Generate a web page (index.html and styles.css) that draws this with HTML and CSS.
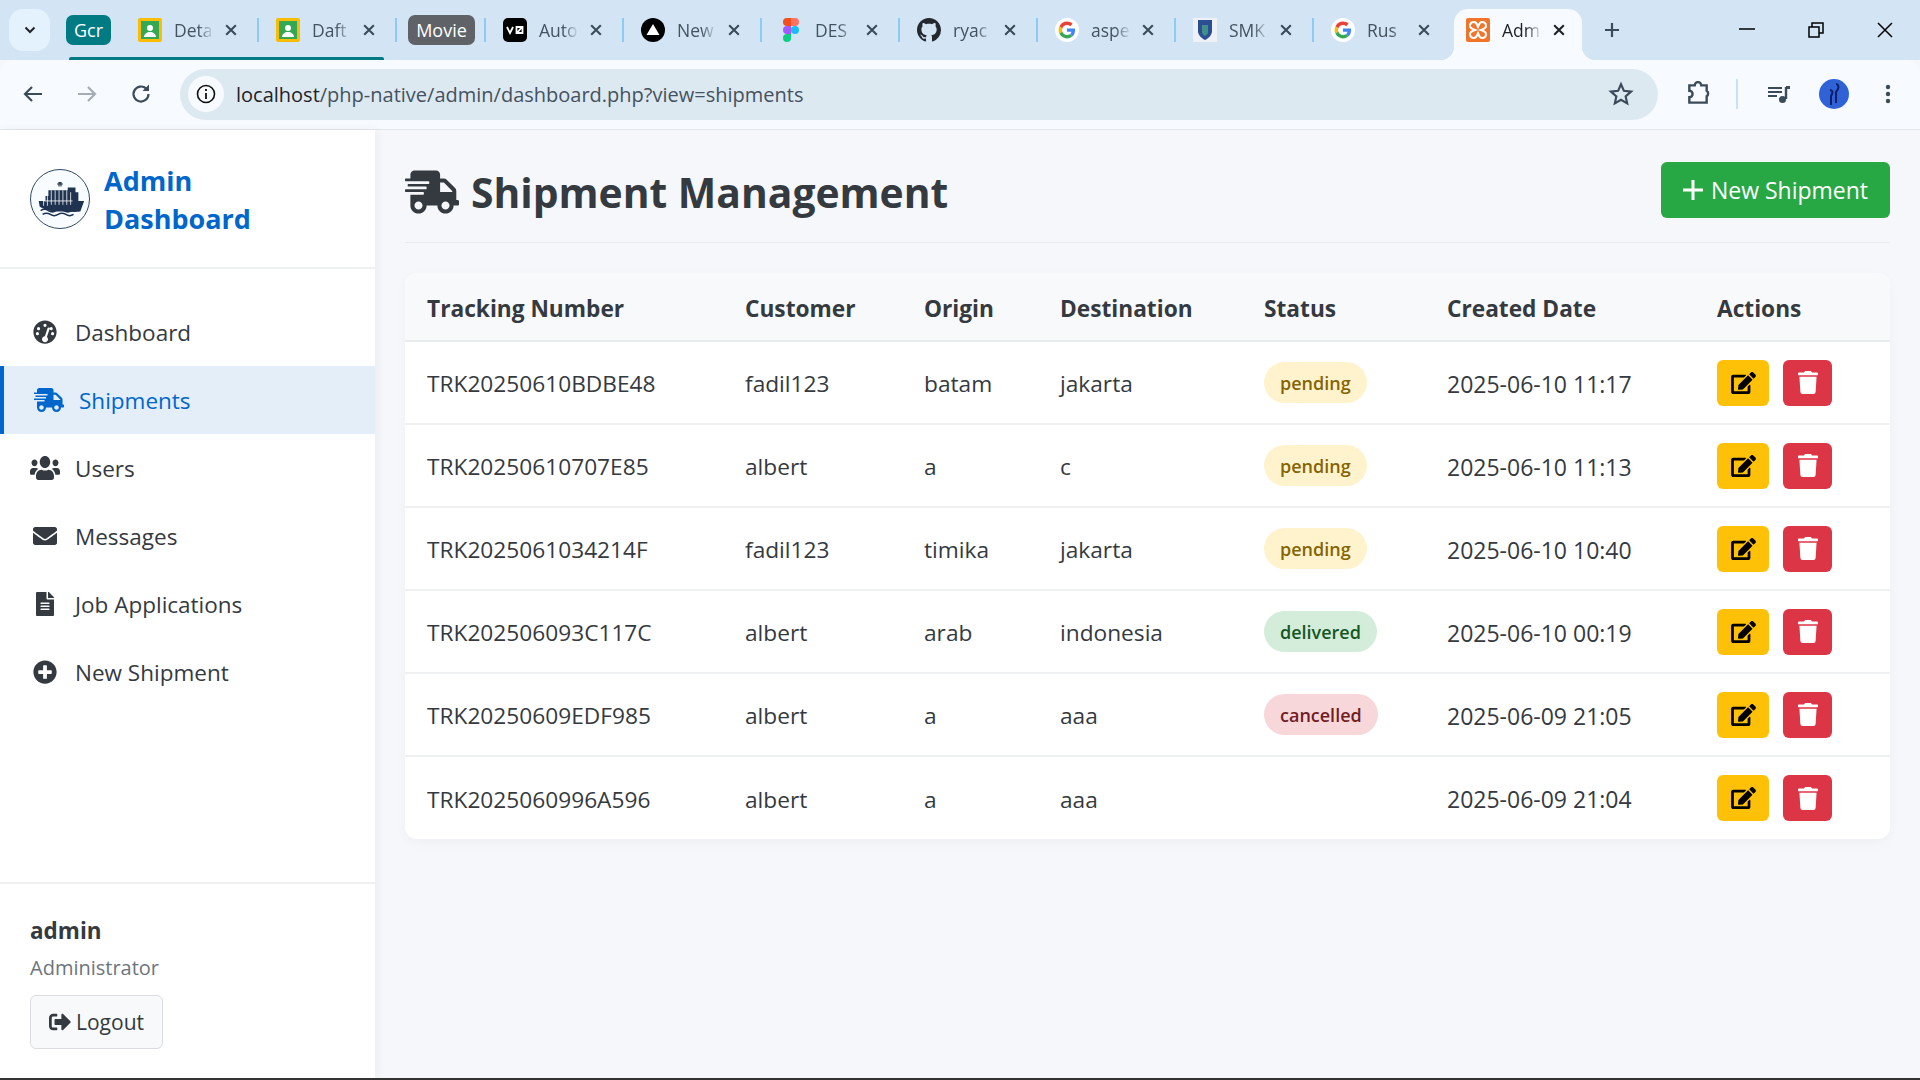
FILE: index.html
```html
<!DOCTYPE html>
<html lang="en">
<head>
  <meta charset="UTF-8">
  <meta name="viewport" content="width=device-width, initial-scale=1.0">
  <title>Admin Dashboard</title>
  <link rel="stylesheet" href="styles.css">
</head>
<body>
  <!-- icon sprite -->
  <svg class="sprite" aria-hidden="true">
    <symbol id="i-truck" viewBox="0 0 640 512"><path d="M624 352h-16V243.9c0-12.7-5.1-24.9-14.1-33.9L494 110.1c-9-9-21.2-14.1-33.9-14.1H416V48c0-26.5-21.5-48-48-48H112C85.5 0 64 21.5 64 48v48H8c-4.4 0-8 3.6-8 8v16c0 4.4 3.6 8 8 8h272c4.4 0 8 3.6 8 8v16c0 4.4-3.6 8-8 8H40c-4.4 0-8 3.6-8 8v16c0 4.4 3.6 8 8 8h208c4.4 0 8 3.6 8 8v16c0 4.4-3.6 8-8 8H8c-4.4 0-8 3.6-8 8v16c0 4.4 3.6 8 8 8h208c4.4 0 8 3.6 8 8v16c0 4.4-3.6 8-8 8H64v128c0 53 43 96 96 96s96-43 96-96h128c0 53 43 96 96 96s96-43 96-96h48c8.8 0 16-7.2 16-16v-32c0-8.8-7.2-16-16-16zM160 464c-26.5 0-48-21.5-48-48s21.5-48 48-48 48 21.5 48 48-21.5 48-48 48zm320 0c-26.5 0-48-21.5-48-48s21.5-48 48-48 48 21.5 48 48-21.5 48-48 48zm80-208H416V144h44.1l99.9 99.9V256z"/></symbol>
    <symbol id="i-gauge" viewBox="0 0 512 512"><path fill-rule="evenodd" d="M256 8C119 8 8 119 8 256s111 248 248 248 248-111 248-248S393 8 256 8zm0 72a34 34 0 1 1 0 68 34 34 0 0 1 0-68zM118 150a34 34 0 1 1 0 68 34 34 0 0 1 0-68zm-24 108a34 34 0 1 1 0 68 34 34 0 0 1 0-68zm324 0a34 34 0 1 1 0 68 34 34 0 0 1 0-68zm-30-108a34 34 0 1 1-1 68 34 34 0 0 1 1-68zm-46 12c11 5 16 17 12 28l-58 174c16 13 24 30 24 46 0 34-28 62-64 62s-64-28-64-62c0-35 27-62 62-63l58-174c4-11 18-16 30-11z"/></symbol>
    <symbol id="i-users" viewBox="0 32 640 448" preserveAspectRatio="none"><path d="M96 224c35.3 0 64-28.7 64-64s-28.7-64-64-64-64 28.7-64 64 28.7 64 64 64zm448 0c35.3 0 64-28.7 64-64s-28.7-64-64-64-64 28.7-64 64 28.7 64 64 64zm32 32h-64c-17.6 0-33.5 7.1-45.1 18.6 40.3 22.1 68.9 62 75.1 109.4h66c17.7 0 32-14.3 32-32v-32c0-35.3-28.7-64-64-64zm-256 0c61.9 0 112-50.1 112-112S381.9 32 320 32 208 82.1 208 144s50.1 112 112 112zm76.8 32h-8.3c-20.8 10-43.9 16-68.5 16s-47.6-6-68.5-16h-8.3C179.6 288 128 339.6 128 403.2V432c0 26.5 21.5 48 48 48h288c26.5 0 48-21.5 48-48v-28.8c0-63.6-51.6-115.2-115.2-115.2zm-223.7-13.4C161.5 263.1 145.6 256 128 256H64c-35.3 0-64 28.7-64 64v32c0 17.7 14.3 32 32 32h65.9c6.3-47.4 34.9-87.3 75.2-109.4z"/></symbol>
    <symbol id="i-mail" viewBox="0 0 512 512"><path d="M502.3 190.8c3.9-3.1 9.7-.2 9.7 4.7V400c0 26.5-21.5 48-48 48H48c-26.5 0-48-21.5-48-48V195.6c0-5 5.7-7.8 9.7-4.7 22.4 17.4 52.1 39.5 154.1 113.6 21.1 15.4 56.7 47.8 92.2 47.6 35.7.3 72-32.8 92.3-47.6 102-74.1 131.6-96.3 154-113.7zM256 320c23.2.4 56.6-29.2 73.4-41.4 132.7-96.3 142.8-104.7 173.4-128.7 5.8-4.5 9.2-11.5 9.2-18.9v-19c0-26.5-21.5-48-48-48H48C21.5 64 0 85.5 0 112v19c0 7.4 3.4 14.3 9.2 18.9 30.6 23.9 40.7 32.4 173.4 128.7 16.8 12.2 50.2 41.8 73.4 41.4z"/></symbol>
    <symbol id="i-file" viewBox="0 0 384 512"><path d="M224 136V0H24C10.7 0 0 10.7 0 24v464c0 13.3 10.7 24 24 24h336c13.3 0 24-10.7 24-24V160H248c-13.2 0-24-10.8-24-24zm64 236c0 6.6-5.4 12-12 12H108c-6.6 0-12-5.4-12-12v-8c0-6.6 5.4-12 12-12h168c6.6 0 12 5.4 12 12v8zm0-64c0 6.6-5.4 12-12 12H108c-6.6 0-12-5.4-12-12v-8c0-6.6 5.4-12 12-12h168c6.6 0 12 5.4 12 12v8zm0-72v8c0 6.6-5.4 12-12 12H108c-6.6 0-12-5.4-12-12v-8c0-6.6 5.4-12 12-12h168c6.6 0 12 5.4 12 12zm96-114.1v6.1H256V0h6.1c6.4 0 12.5 2.5 17 7l97.9 98c4.5 4.5 7 10.6 7 16.9z"/></symbol>
    <symbol id="i-plus-circle" viewBox="0 0 512 512"><path d="M256 8C119 8 8 119 8 256s111 248 248 248 248-111 248-248S393 8 256 8zm144 276c0 6.6-5.4 12-12 12h-92v92c0 6.6-5.4 12-12 12h-56c-6.6 0-12-5.4-12-12v-92h-92c-6.6 0-12-5.4-12-12v-56c0-6.6 5.4-12 12-12h92v-92c0-6.6 5.4-12 12-12h56c6.6 0 12 5.4 12 12v92h92c6.6 0 12 5.4 12 12v56z"/></symbol>
    <symbol id="i-logout" viewBox="0 0 512 512"><path d="M497 273L329 441c-15 15-41 4.5-41-17v-96H152c-13.3 0-24-10.7-24-24v-96c0-13.3 10.7-24 24-24h136V88c0-21.4 25.9-32 41-17l168 168c9.3 9.4 9.3 24.6 0 34zM192 436v-40c0-6.6-5.4-12-12-12H96c-17.7 0-32-14.3-32-32V160c0-17.7 14.3-32 32-32h84c6.6 0 12-5.4 12-12V76c0-6.6-5.4-12-12-12H96c-53 0-96 43-96 96v192c0 53 43 96 96 96h84c6.6 0 12-5.4 12-12z"/></symbol>
    <symbol id="i-trash" viewBox="0 0 448 512"><path d="M432 32H312l-9.4-18.7A24 24 0 0 0 281.1 0H166.8a23.72 23.72 0 0 0-21.4 13.3L136 32H16A16 16 0 0 0 0 48v32a16 16 0 0 0 16 16h416a16 16 0 0 0 16-16V48a16 16 0 0 0-16-16zM53.2 467a48 48 0 0 0 47.9 45h245.8a48 48 0 0 0 47.9-45L416 128H32z"/></symbol>
    <symbol id="i-edit" viewBox="0 0 576 512"><path d="M402.6 83.2l90.2 90.2c3.8 3.8 3.8 10 0 13.8L274.4 405.6l-92.8 10.3c-12.4 1.4-22.9-9.1-21.5-21.5l10.3-92.8L388.8 83.2c3.8-3.8 10-3.8 13.8 0zm162-22.9l-48.8-48.8c-15.2-15.2-39.9-15.2-55.2 0l-35.4 35.4c-3.8 3.8-3.8 10 0 13.8l90.2 90.2c3.8 3.8 10 3.8 13.8 0l35.4-35.4c15.2-15.3 15.2-40 0-55.2zM384 346.2V448H64V128h229.8c3.2 0 6.2-1.3 8.5-3.5l40-40c7.6-7.6 2.2-20.5-8.5-20.5H48C21.5 64 0 85.5 0 112v352c0 26.5 21.5 48 48 48h352c26.5 0 48-21.5 48-48V306.2c0-10.7-12.9-16-20.5-8.5l-40 40c-2.2 2.3-3.5 5.3-3.5 8.5z"/></symbol>
    <symbol id="i-x" viewBox="0 0 16 16"><path d="M2.5 2.5l11 11M13.5 2.5l-11 11" fill="none" stroke="currentColor" stroke-width="2.4"/></symbol>
    <symbol id="f-classroom" viewBox="0 0 24 24"><rect width="24" height="24" rx="2" fill="#fbbc04"/><rect x="3" y="3" width="18" height="18" fill="#34a853"/><circle cx="12" cy="10" r="3" fill="#fff"/><path d="M6 19c0-3 3-5 6-5s6 2 6 5z" fill="#fff"/></symbol>
    <symbol id="f-google" viewBox="0 0 24 24"><circle cx="12" cy="12" r="12" fill="#fff"/><g transform="translate(3.6 3.6) scale(.35)"><path fill="#ea4335" d="M24 9.5c3.54 0 6.71 1.22 9.21 3.6l6.85-6.85C35.9 2.38 30.47 0 24 0 14.62 0 6.51 5.38 2.56 13.22l7.98 6.19C12.43 13.72 17.74 9.5 24 9.5z"/><path fill="#4285f4" d="M46.98 24.55c0-1.57-.15-3.09-.38-4.55H24v9.02h12.94c-.58 2.96-2.26 5.48-4.78 7.18l7.73 6c4.51-4.18 7.09-10.36 7.09-17.65z"/><path fill="#fbbc05" d="M10.53 28.59c-.48-1.45-.76-2.99-.76-4.59s.27-3.14.76-4.59l-7.98-6.19C.92 16.46 0 20.12 0 24c0 3.88.92 7.54 2.56 10.78l7.97-6.19z"/><path fill="#34a853" d="M24 48c6.48 0 11.93-2.13 15.89-5.81l-7.73-6c-2.15 1.45-4.92 2.3-8.16 2.3-6.26 0-11.57-4.22-13.47-9.91l-7.98 6.19C6.51 42.62 14.62 48 24 48z"/></g></symbol>
  </svg>

  <header class="browser">
    <div class="tabstrip">
      <div class="tab-search"><svg class="chev" viewBox="0 0 12 8"><path d="M1.5 1.5L6 6l4.5-4.5" fill="none" stroke="#1f2328" stroke-width="2"/></svg></div>

      <div class="tab-group">
        <span class="chip chip-teal">Gcr</span>
        <div class="tab">
          <svg class="favicon"><use href="#f-classroom"/></svg>
          <span class="tab-title">Deta</span>
          <svg class="tab-close"><use href="#i-x"/></svg>
        </div>
        <div class="tab">
          <svg class="favicon"><use href="#f-classroom"/></svg>
          <span class="tab-title">Daft</span>
          <svg class="tab-close"><use href="#i-x"/></svg>
        </div>
      </div>

      <div class="chip-wrap"><span class="chip chip-gray">Movie</span></div>

      <div class="tab">
        <svg class="favicon" viewBox="0 0 24 24"><rect width="24" height="24" rx="5" fill="#000"/><path d="M4 9l3 6 3-6M13.5 9h6v6h-6zM14 15l5-6" fill="none" stroke="#fff" stroke-width="1.8"/></svg>
        <span class="tab-title">Auto</span>
        <svg class="tab-close"><use href="#i-x"/></svg>
      </div>
      <div class="tab">
        <svg class="favicon" viewBox="0 0 24 24"><circle cx="12" cy="12" r="12" fill="#000"/><path d="M12 6l6.5 11h-13z" fill="#fff"/></svg>
        <span class="tab-title">New</span>
        <svg class="tab-close"><use href="#i-x"/></svg>
      </div>
      <div class="tab">
        <svg class="favicon" viewBox="0 0 24 24"><path d="M8 0h4v8H8a4 4 0 0 1 0-8z" fill="#f24e1e"/><path d="M12 0h4a4 4 0 0 1 0 8h-4z" fill="#ff7262"/><path d="M8 8h4v8H8a4 4 0 0 1 0-8z" fill="#a259ff"/><circle cx="16" cy="12" r="4" fill="#1abcfe"/><path d="M8 16h4v4a4 4 0 1 1-4-4z" fill="#0acf83"/></svg>
        <span class="tab-title">DES</span>
        <svg class="tab-close"><use href="#i-x"/></svg>
      </div>
      <div class="tab">
        <svg class="favicon" viewBox="0 0 16 16"><path fill="#24292f" d="M8 0C3.58 0 0 3.58 0 8c0 3.54 2.29 6.53 5.47 7.59.4.07.55-.17.55-.38 0-.19-.01-.82-.01-1.49-2.01.37-2.53-.49-2.69-.94-.09-.23-.48-.94-.82-1.13-.28-.15-.68-.52-.01-.53.63-.01 1.08.58 1.23.82.72 1.21 1.87.87 2.33.66.07-.52.28-.87.51-1.07-1.78-.2-3.64-.89-3.64-3.95 0-.87.31-1.59.82-2.15-.08-.2-.36-1.02.08-2.12 0 0 .67-.21 2.2.82.64-.18 1.32-.27 2-.27.68 0 1.36.09 2 .27 1.53-1.04 2.2-.82 2.2-.82.44 1.1.16 1.92.08 2.12.51.56.82 1.27.82 2.15 0 3.07-1.87 3.75-3.65 3.95.29.25.54.73.54 1.48 0 1.07-.01 1.93-.01 2.2 0 .21.15.46.55.38A8.013 8.013 0 0016 8c0-4.42-3.58-8-8-8z"/></svg>
        <span class="tab-title">ryac</span>
        <svg class="tab-close"><use href="#i-x"/></svg>
      </div>
      <div class="tab">
        <svg class="favicon"><use href="#f-google"/></svg>
        <span class="tab-title">aspe</span>
        <svg class="tab-close"><use href="#i-x"/></svg>
      </div>
      <div class="tab">
        <svg class="favicon" viewBox="0 0 24 24"><rect width="24" height="24" fill="#eef1f5"/><path d="M5 2h14v11c0 4-3 7-7 9-4-2-7-5-7-9z" fill="#2c4f94"/><path d="M9 7h6v7c0 2-1.5 3-3 4-1.5-1-3-2-3-4z" fill="#3f8f8a"/></svg>
        <span class="tab-title">SMK</span>
        <svg class="tab-close"><use href="#i-x"/></svg>
      </div>
      <div class="tab tab-last">
        <svg class="favicon"><use href="#f-google"/></svg>
        <span class="tab-title">Rus</span>
        <svg class="tab-close"><use href="#i-x"/></svg>
      </div>
      <div class="tab-active">
        <svg class="favicon" viewBox="0 0 24 24"><rect width="24" height="24" rx="2" fill="#f0742a"/><path d="M8 4c-3 0-4 2-4 4s2 3 5 4c-3 1-5 2-5 4s1 4 4 4 3-3 4-5c1 2 1 5 4 5s4-2 4-4-2-3-5-4c3-1 5-2 5-4s-1-4-4-4-3 3-4 5c-1-2-1-5-4-5z" fill="none" stroke="#fff" stroke-width="2"/></svg>
        <span class="tab-title">Adm</span>
        <svg class="tab-close"><use href="#i-x"/></svg>
      </div>
      <svg class="new-tab" viewBox="0 0 16 16"><path d="M8 1v14M1 8h14" fill="none" stroke="#3c4b59" stroke-width="2.2"/></svg>

      <div class="win-controls">
        <svg class="win-btn" viewBox="0 0 16 16"><path d="M0 7h16" stroke="#000" stroke-width="1.5"/></svg>
        <svg class="win-btn" viewBox="0 0 16 16"><path d="M1 5h10v10H1zM4 5V1h11v10h-4" fill="none" stroke="#000" stroke-width="1.5"/></svg>
        <svg class="win-btn" viewBox="0 0 16 16"><path d="M1 1l14 14M15 1L1 15" fill="none" stroke="#000" stroke-width="1.5"/></svg>
      </div>
    </div>

    <div class="toolbar">
      <svg class="tool" viewBox="0 0 24 24"><path d="M21 12H4M11 5l-7 7 7 7" fill="none" stroke="#3c4b59" stroke-width="2.2"/></svg>
      <svg class="tool" viewBox="0 0 24 24"><path d="M3 12h17M13 5l7 7-7 7" fill="none" stroke="#a4adb5" stroke-width="2.2"/></svg>
      <svg class="tool" viewBox="0 0 24 24"><path d="M19.5 12a7.5 7.5 0 1 1-2.3-5.4" fill="none" stroke="#3c4b59" stroke-width="2.2"/><path d="M20 2.5V9h-6.5z" fill="#3c4b59"/></svg>
      <div class="omnibox">
        <span class="site-info"><svg viewBox="0 0 20 20"><circle cx="10" cy="10" r="8.5" fill="none" stroke="#111" stroke-width="1.6"/><path d="M10 9v6M10 5v2" stroke="#111" stroke-width="1.8"/></svg></span>
        <span class="url"><b>localhost</b>/php-native/admin/dashboard.php?view=shipments</span>
        <svg class="star" viewBox="0 0 24 24"><path d="M12 3l2.7 6.1 6.6.7-5 4.4 1.4 6.5L12 17.4l-5.700 3.300 1.400-6.500-5-4.400 6.600-.7z" fill="none" stroke="#3c4b59" stroke-width="2"/></svg>
      </div>
      <svg class="tool ext" viewBox="0 0 24 24"><path d="M4 5h5a3 3 0 0 1 6 0h5v5a3 3 0 0 1 0 5v6H4v-5a3 3 0 0 0 0-6z" transform="translate(0 -1)" fill="none" stroke="#3c4b59" stroke-width="2.2"/></svg>
      <span class="tool-sep"></span>
      <svg class="tool queue" viewBox="0 0 24 24"><path d="M1 6h14M1 10h14M1 14h9" stroke="#3c4b59" stroke-width="2"/><path d="M19 5v12" stroke="#3c4b59" stroke-width="2.4"/><path d="M19 4h4v3h-4z" fill="#3c4b59"/><circle cx="15.5" cy="17.5" r="3.5" fill="#3c4b59"/></svg>
      <span class="avatar"><svg viewBox="0 0 30 30"><path d="M17 5c2 0 3 2 2 5l-2 3v11M11 11c2 0 3 2 2 4l-1 2v9" fill="none" stroke="#0f1f66" stroke-width="2"/></svg></span>
      <svg class="tool dots" viewBox="0 0 24 24"><circle cx="12" cy="5" r="2.2" fill="#3c4b59"/><circle cx="12" cy="12" r="2.2" fill="#3c4b59"/><circle cx="12" cy="19" r="2.2" fill="#3c4b59"/></svg>
    </div>
  </header>

  <div class="app">
    <aside class="sidebar">
      <div class="brand">
        <span class="brand-logo">
          <svg viewBox="0 0 60 60">
            <path d="M9 38l-1-6h7v-5h3v-6h20v-3h8v5h3v9h6l-4 11c-6 1-12 0-18 0-8 0-16 0-24-5z" fill="#1f3350"/>
            <path d="M29 17v-4h2v4M27 14.5h6" stroke="#1f3350" stroke-width="1.2" fill="none"/>
            <path d="M13 27v10M17 27v10M21 21v15M25 21v15M29 21v15M33 21v15M37 21v15M41 23v13M13 32h30" stroke="#fff" stroke-width=".8" fill="none"/>
            <path d="M10 42c3-2 5-2 8 0s5 2 8 0 5-2 8 0 5 2 8 0 5-2 8 0" fill="none" stroke="#1f3350" stroke-width="1.6"/>
            <path d="M12 46c3-2 5-2 8 0s5 2 8 0 5-2 8 0 5 2 8 0" fill="none" stroke="#1f3350" stroke-width="1.6"/>
          </svg>
        </span>
        <h1 class="brand-title">Admin Dashboard</h1>
      </div>

      <nav class="side-nav">
        <a class="nav-item"><span class="nav-icon"><svg class="ico-gauge"><use href="#i-gauge"/></svg></span>Dashboard</a>
        <a class="nav-item active"><span class="nav-icon"><svg class="ico-truck"><use href="#i-truck"/></svg></span>Shipments</a>
        <a class="nav-item"><span class="nav-icon"><svg class="ico-users"><use href="#i-users"/></svg></span>Users</a>
        <a class="nav-item"><span class="nav-icon"><svg class="ico-mail"><use href="#i-mail"/></svg></span>Messages</a>
        <a class="nav-item"><span class="nav-icon"><svg class="ico-file"><use href="#i-file"/></svg></span>Job Applications</a>
        <a class="nav-item"><span class="nav-icon"><svg class="ico-gauge"><use href="#i-plus-circle"/></svg></span>New Shipment</a>
      </nav>

      <div class="side-footer">
        <div class="user-name">admin</div>
        <div class="user-role">Administrator</div>
        <button class="btn-logout"><svg class="ico-logout"><use href="#i-logout"/></svg>Logout</button>
      </div>
    </aside>

    <main class="content">
      <div class="page-header">
        <h2 class="page-title"><svg class="title-icon"><use href="#i-truck"/></svg>Shipment Management</h2>
        <button class="btn-new"><svg class="plus" viewBox="0 0 20 20"><path d="M10 0v20M0 10h20" stroke="#fff" stroke-width="3"/></svg>New Shipment</button>
      </div>

      <div class="table-container">
        <table>
          <thead>
            <tr>
              <th>Tracking Number</th><th>Customer</th><th>Origin</th><th>Destination</th><th>Status</th><th>Created Date</th><th>Actions</th>
            </tr>
          </thead>
          <tbody>
            <tr>
              <td>TRK20250610BDBE48</td><td>fadil123</td><td>batam</td><td>jakarta</td>
              <td><span class="badge pending">pending</span></td><td>2025-06-10 11:17</td>
              <td><div class="action-buttons"><button class="btn-edit"><svg><use href="#i-edit"/></svg></button><button class="delete-btn"><svg><use href="#i-trash"/></svg></button></div></td>
            </tr>
            <tr>
              <td>TRK20250610707E85</td><td>albert</td><td>a</td><td>c</td>
              <td><span class="badge pending">pending</span></td><td>2025-06-10 11:13</td>
              <td><div class="action-buttons"><button class="btn-edit"><svg><use href="#i-edit"/></svg></button><button class="delete-btn"><svg><use href="#i-trash"/></svg></button></div></td>
            </tr>
            <tr>
              <td>TRK2025061034214F</td><td>fadil123</td><td>timika</td><td>jakarta</td>
              <td><span class="badge pending">pending</span></td><td>2025-06-10 10:40</td>
              <td><div class="action-buttons"><button class="btn-edit"><svg><use href="#i-edit"/></svg></button><button class="delete-btn"><svg><use href="#i-trash"/></svg></button></div></td>
            </tr>
            <tr>
              <td>TRK202506093C117C</td><td>albert</td><td>arab</td><td>indonesia</td>
              <td><span class="badge delivered">delivered</span></td><td>2025-06-10 00:19</td>
              <td><div class="action-buttons"><button class="btn-edit"><svg><use href="#i-edit"/></svg></button><button class="delete-btn"><svg><use href="#i-trash"/></svg></button></div></td>
            </tr>
            <tr>
              <td>TRK20250609EDF985</td><td>albert</td><td>a</td><td>aaa</td>
              <td><span class="badge cancelled">cancelled</span></td><td>2025-06-09 21:05</td>
              <td><div class="action-buttons"><button class="btn-edit"><svg><use href="#i-edit"/></svg></button><button class="delete-btn"><svg><use href="#i-trash"/></svg></button></div></td>
            </tr>
            <tr>
              <td>TRK2025060996A596</td><td>albert</td><td>a</td><td>aaa</td>
              <td></td><td>2025-06-09 21:04</td>
              <td><div class="action-buttons"><button class="btn-edit"><svg><use href="#i-edit"/></svg></button><button class="delete-btn"><svg><use href="#i-trash"/></svg></button></div></td>
            </tr>
          </tbody>
        </table>
      </div>
    </main>
  </div>
  <div class="taskbar-edge"></div>
</body>
</html>
```

FILE: styles.css
```css
* {
  box-sizing: border-box;
}
html, body {
  height: 100%;
}
body {
  font-family: "Open Sans", "Noto Sans", sans-serif;
  background-color: #f5f7fb;
  color: #343a40;
  margin: 0;
  padding: 0;
  display: flex;
  flex-direction: column;
  overflow: hidden;
}
.sprite {
  display: none;
}

/* browser chrome */
.browser {
  flex: none;
}
.tabstrip {
  height: 60px;
  background: #d3e5f4;
  display: flex;
  align-items: center;
  padding-left: 9px;
}
.tab-search {
  width: 41px;
  height: 42px;
  border-radius: 14px;
  background: #e3f2fd;
  display: flex;
  align-items: center;
  justify-content: center;
  margin-right: 6px;
}
.chev {
  width: 12px;
  height: 8px;
}
.tab-group {
  display: flex;
  align-items: center;
  position: relative;
  height: 60px;
  padding-left: 10px;
}
.tab-group::after {
  content: "";
  position: absolute;
  left: 13px;
  right: 13px;
  bottom: 0;
  height: 3px;
  background: #007b83;
  border-radius: 2px 2px 0 0;
}
.chip {
  color: #fff;
  font-size: 18px;
  height: 30px;
  border-radius: 7px;
  display: flex;
  align-items: center;
  justify-content: center;
}
.chip-teal {
  background: #007b83;
  width: 45px;
  margin-right: 10px;
}
.chip-wrap {
  width: 89px;
  padding-left: 11px;
  position: relative;
}
.chip-wrap::after,
.tab::after {
  content: "";
  position: absolute;
  right: 0;
  top: 18px;
  width: 2px;
  height: 24px;
  background: #8ccbf5;
}
.chip-wrap::after {
  top: 3px;
}
.chip-gray {
  background: #5f6368;
  width: 67px;
}
.tab {
  position: relative;
  width: 138px;
  height: 60px;
  flex: none;
  display: flex;
  align-items: center;
  padding-left: 17px;
}
.tab-last::after {
  display: none;
}
.favicon {
  width: 24px;
  height: 24px;
  flex: none;
}
.tab-title {
  width: 40px;
  margin-left: 12px;
  margin-right: 1px;
  font-size: 17.5px;
  color: #45525f;
  white-space: nowrap;
  -webkit-mask-image: linear-gradient(to right, #000 60%, transparent);
  mask-image: linear-gradient(to right, #000 60%, transparent);
}
.tab-close {
  width: 14px;
  height: 14px;
  margin-left: 9px;
  flex: none;
  color: #3c4b59;
}
.tab-active {
  position: relative;
  align-self: flex-end;
  width: 128px;
  height: 51px;
  margin-left: 2px;
  flex: none;
  background: #f7faff;
  border-radius: 14px 14px 0 0;
  display: flex;
  align-items: center;
  padding: 0 0 9px 12px;
}
.tab-active::before,
.tab-active::after {
  content: "";
  position: absolute;
  bottom: 0;
  width: 14px;
  height: 14px;
}
.tab-active::before {
  left: -14px;
  background: radial-gradient(circle at 0 0, transparent 14px, #f7faff 14.5px);
}
.tab-active::after {
  right: -14px;
  background: radial-gradient(circle at 100% 0, transparent 14px, #f7faff 14.5px);
}
.tab-active .tab-title {
  color: #1f2328;
}
.tab-active .tab-close {
  color: #1f2328;
}
.new-tab {
  width: 16px;
  height: 16px;
  margin-left: 22px;
}
.win-controls {
  margin-left: auto;
  display: flex;
  align-items: center;
  gap: 53px;
  padding-right: 27px;
}
.win-btn {
  width: 16px;
  height: 16px;
}

.toolbar {
  height: 70px;
  background: #f7faff;
  border-radius: 14px 14px 0 0;
  border-bottom: 1px solid #e3e6ea;
  display: flex;
  align-items: center;
  padding: 0 20px 1px 21px;
}
.tool {
  width: 24px;
  height: 24px;
  flex: none;
  margin-right: 30px;
}
.tool:nth-child(3) {
  margin-right: 27px;
}
.omnibox {
  width: 1484px;
  height: 51px;
  background: #dde9f1;
  border-radius: 26px;
  display: flex;
  align-items: center;
  padding: 0 24px 0 8px;
  margin-right: 27px;
}
.site-info {
  width: 36px;
  height: 36px;
  background: #f7faff;
  border-radius: 50%;
  display: flex;
  align-items: center;
  justify-content: center;
}
.site-info svg {
  width: 20px;
  height: 20px;
}
.url {
  margin-left: 12px;
  font-size: 20px;
  color: #45525f;
}
.url b {
  font-weight: 400;
  color: #1f2328;
}
.star {
  width: 26px;
  height: 26px;
  margin-left: auto;
}
.ext {
  margin-right: 0;
  width: 26px;
  height: 26px;
}
.tool-sep {
  width: 2px;
  height: 30px;
  background: #c5e3f9;
  margin: 0 29px 0 25px;
}
.queue {
  margin-right: 28px;
}
.avatar {
  width: 30px;
  height: 30px;
  border-radius: 50%;
  background: #2f62d6;
  flex: none;
  margin-right: 27px;
}
.avatar svg {
  display: block;
}
.dots {
  margin-right: 0;
}

/* app */
.app {
  flex: 1;
  display: flex;
  min-height: 0;
}
.sidebar {
  width: 375px;
  flex: none;
  background: white;
  display: flex;
  flex-direction: column;
  box-shadow: 2px 0 10px rgba(0, 0, 0, 0.05);
}
.brand {
  height: 139px;
  border-bottom: 2px solid #eef0f2;
  display: flex;
  align-items: center;
  padding: 0 30px;
  gap: 14px;
}
.brand-logo {
  width: 60px;
  height: 60px;
  flex: none;
  border-radius: 50%;
  border: 1.5px solid #2f4a66;
  background: #f8fbff;
}
.brand-logo svg {
  display: block;
  width: 100%;
  height: 100%;
}
.brand-title {
  margin: 0;
  padding-top: 3px;
  width: 180px;
  font-size: 27px;
  line-height: 38px;
  font-weight: 700;
  color: #0066cc;
}
.side-nav {
  padding-top: 29px;
  display: flex;
  flex-direction: column;
}
.nav-item {
  height: 68px;
  display: flex;
  align-items: center;
  padding-left: 30px;
  font-size: 22.5px;
  color: #343a40;
}
.nav-item.active {
  background: #e3eef9;
  color: #0066cc;
  border-left: 4px solid #0066cc;
}
.nav-icon {
  width: 30px;
  margin-right: 15px;
  display: flex;
  justify-content: center;
  flex: none;
}
.nav-icon svg {
  fill: currentColor;
  display: block;
}
.ico-gauge { width: 24px; height: 24px; }
.ico-truck { width: 30px; height: 24px; }
.ico-users { width: 30px; height: 24px; }
.ico-mail { width: 24px; height: 24px; }
.ico-file { width: 18px; height: 24px; }

.side-footer {
  margin-top: auto;
  border-top: 2px solid #eef0f2;
  padding: 29px 30px 29px;
}
.user-name {
  font-size: 22.5px;
  font-weight: 700;
  line-height: 36px;
}
.user-role {
  font-size: 20px;
  color: #6c757d;
  line-height: 38px;
}
.btn-logout {
  margin-top: 8px;
  width: 133px;
  height: 54px;
  border: 1px solid #dadce0;
  border-radius: 6px;
  background: #f8f9fa;
  color: #343a40;
  font: inherit;
  font-size: 21px;
  display: flex;
  align-items: center;
  justify-content: center;
  gap: 5px;
  padding: 0;
}
.ico-logout {
  width: 22px;
  height: 22px;
  fill: currentColor;
}

.content {
  flex: 1;
  padding: 32px 30px 0;
  min-width: 0;
}
.page-header {
  display: flex;
  justify-content: space-between;
  align-items: center;
  padding-bottom: 24px;
  border-bottom: 1px solid #e9ecef;
  margin-bottom: 30px;
}
.page-title {
  margin: 0;
  padding-top: 4px;
  display: flex;
  align-items: center;
  gap: 12px;
  font-size: 40.8px;
  font-weight: 700;
  line-height: 52px;
  color: #343a40;
}
.title-icon {
  width: 54px;
  height: 44px;
  fill: currentColor;
}
.btn-new {
  width: 229px;
  height: 56px;
  background: #28a745;
  color: white;
  border: none;
  border-radius: 6px;
  font: inherit;
  font-size: 23px;
  display: flex;
  align-items: center;
  justify-content: center;
  gap: 8px;
  padding: 0;
}
.plus {
  width: 20px;
  height: 20px;
}

.table-container {
  background: white;
  border-radius: 12px;
  box-shadow: 0 4px 12px rgba(0, 0, 0, 0.03);
  overflow: hidden;
}
.table-container table {
  width: 100%;
  border-collapse: collapse;
  table-layout: fixed;
  font-size: 22.7px;
}
.table-container th, .table-container td {
  padding: 2px 0 0 22px;
  text-align: left;
}
.table-container th {
  height: 68px;
  padding-top: 4px;
  background: #f8f9fa;
  font-weight: 700;
  border-bottom: 2px solid #e9ecef;
}
.table-container td {
  height: 83px;
  border-bottom: 2px solid #eef0f2;
}
.table-container td:nth-child(5),
.table-container td:nth-child(7) {
  padding-top: 0;
}
.table-container td:nth-child(6) {
  font-size: 23px;
}
.table-container tr:last-child td {
  border-bottom: none;
}
th:nth-child(1) { width: 318px; }
th:nth-child(2) { width: 179px; }
th:nth-child(3) { width: 136px; }
th:nth-child(4) { width: 204px; }
th:nth-child(5) { width: 183px; }
th:nth-child(6) { width: 270px; }
.badge {
  display: inline-flex;
  align-items: center;
  height: 41px;
  padding: 0 16px;
  border-radius: 21px;
  font-size: 18px;
  font-weight: 600;
  vertical-align: middle;
}
.pending { background: #fff3cd; color: #856404; }
.delivered { background: #d4edda; color: #155724; }
.cancelled { background: #f8d7da; color: #721c24; }
.action-buttons {
  display: flex;
  gap: 14px;
}
.action-buttons button {
  height: 46px;
  border: none;
  border-radius: 6px;
  padding: 0;
  display: flex;
  align-items: center;
  justify-content: center;
}
.btn-edit {
  width: 52px;
  background-color: #ffc107;
}
.btn-edit svg {
  width: 25px;
  height: 22px;
  fill: #000;
}
.delete-btn {
  width: 49px;
  background-color: #dc3545;
}
.delete-btn svg {
  width: 20px;
  height: 23px;
  fill: #fff;
}
.taskbar-edge {
  flex: none;
  height: 2px;
  background: #333;
}
```
